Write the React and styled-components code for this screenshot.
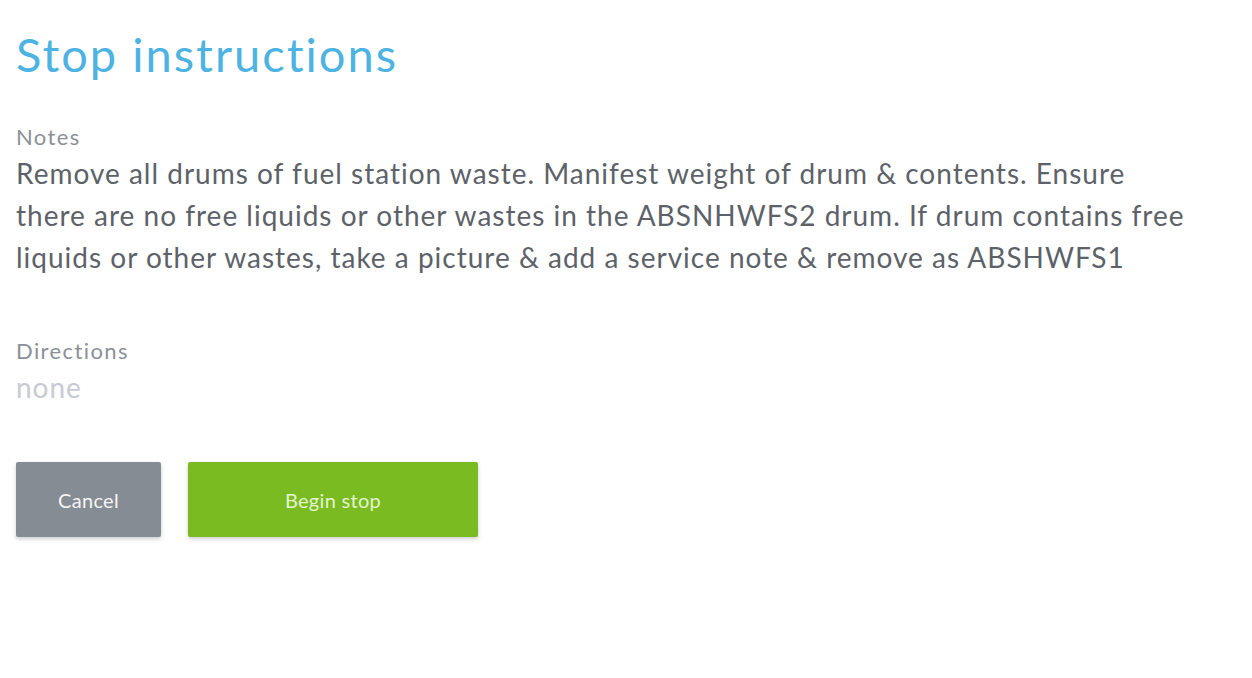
import React from "react";
import styled, { createGlobalStyle } from "styled-components";

const GlobalStyle = createGlobalStyle`
  body {
    margin: 0;
    background: #ffffff;
    font-family: Lato, "Noto Sans", sans-serif;
  }
`;

const Page = styled.div`
  padding: 24px 16px;
  display: flex;
  flex-direction: column;
`;

const Title = styled.h1`
  margin: 0;
  font-size: 47px;
  font-weight: 400;
  line-height: 60px;
  letter-spacing: 2px;
  color: #4db3e2;
`;

const Field = styled.section`
  display: flex;
  flex-direction: column;
  margin-top: ${(p) => p.$gap}px;
`;

const Label = styled.div`
  font-size: 22px;
  line-height: 30px;
  letter-spacing: 1.4px;
  color: #8b9097;
`;

const Value = styled.div`
  font-size: 28px;
  line-height: 42px;
  letter-spacing: 1px;
  color: ${(p) => (p.$empty ? "#c7cbd2" : "#5d6269")};
`;

const Actions = styled.div`
  display: flex;
  gap: 27px;
  margin-top: 54px;
`;

const Button = styled.button`
  width: ${(p) => p.$width}px;
  height: 75px;
  border: none;
  border-radius: 2px;
  font-family: inherit;
  font-size: 20px;
  letter-spacing: 0.3px;
  color: ${(p) => p.$fg};
  background: ${(p) => p.$bg};
  box-shadow: 0 2px 4px rgba(0, 0, 0, 0.2);
  cursor: pointer;
`;

export default function App() {
  return (
    <>
      <GlobalStyle />
      <Page>
        <Title>Stop instructions</Title>
        <Field $gap={38}>
          <Label>Notes</Label>
          <Value>
            Remove all drums of fuel station waste. Manifest weight of drum &amp; contents. Ensure
            <br />
            there are no free liquids or other wastes in the ABSNHWFS2 drum. If drum contains free
            <br />
            liquids or other wastes, take a picture &amp; add a service note &amp; remove as ABSHWFS1
          </Value>
        </Field>
        <Field $gap={58}>
          <Label>Directions</Label>
          <Value $empty>none</Value>
        </Field>
        <Actions>
          <Button $width={145} $bg="#868c94" $fg="#f4f5f6">Cancel</Button>
          <Button $width={290} $bg="#79bb21" $fg="#e4f4cf">Begin stop</Button>
        </Actions>
      </Page>
    </>
  );
}
